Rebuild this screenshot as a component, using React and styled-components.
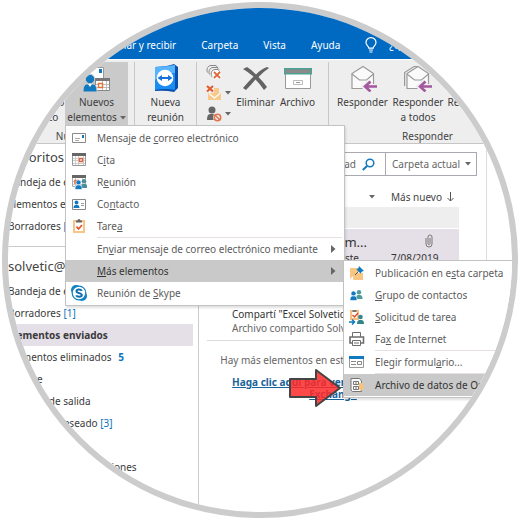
import React, { useState } from 'react';
import styled, { createGlobalStyle } from 'styled-components';

const GlobalStyle = createGlobalStyle`
  * {
    box-sizing: border-box;
  }
  body {
    margin: 2px;
    background: #fff;
    color: #444;
    font: 10px/14px "Noto Sans", "Open Sans", sans-serif;
  }
  button, input, select {
    margin: 0;
    padding: 0;
    border: 0;
    background: none;
    color: inherit;
    font: inherit;
  }
`;

const Lens = styled.div`
  width: 100%;
  aspect-ratio: 1;
  border: 6px solid #ccc;
  border-radius: 50%;
  overflow: hidden;
  display: flex;
  flex-direction: column;
  background: #fff;
`;

/* title bar and tabs */
const Tabs = styled.nav`
  display: flex;
  align-items: flex-end;
  gap: 25px;
  height: 51px;
  padding: 0 0 7px 99px;
  background: #0069c2;
  color: #fff;
  white-space: nowrap;
  flex: none;
`;

const Tab = styled.button`
  display: flex;
  align-items: center;
  gap: 12px;
  height: 14px;
`;

/* ribbon */
const Ribbon = styled.div`
  display: flex;
  height: 84px;
  margin-top: 1px;
  padding-top: 2px;
  background: #eee;
  border-bottom: 1px solid #c6c6c6;
  flex: none;
`;

const Group = styled.section`
  display: flex;
  flex-direction: column;
  flex: none;
  padding: 0 ${({ $pad }) => $pad || 0}px;
  border-right: 1px solid #c8c8c8;
`;

const GroupButtons = styled.div`
  display: flex;
  height: 65px;
`;

const GroupLabel = styled.div`
  height: 16px;
  line-height: 18px;
  text-align: center;
`;

const BigButton = styled.button`
  display: flex;
  flex-direction: column;
  align-items: center;
  justify-content: flex-start;
  width: ${({ $width }) => $width}px;
  height: 65px;
  padding-right: ${({ $shift }) => $shift || 0}px;
  line-height: 15px;
  white-space: nowrap;
  color: #3c3c3c;
  background: ${({ $active }) => ($active ? '#cacaca' : 'none')};

  > svg {
    flex: none;
    margin: 2px 0 3px;
  }
`;

const CaretLine = styled.span`
  display: flex;
  align-items: center;
  gap: 3px;
`;

const SmallButtons = styled.div`
  display: flex;
  flex-direction: column;
  gap: 5px;
  width: 29px;
  padding-top: 2px;
`;

const SmallButton = styled.button`
  display: flex;
  align-items: center;
  gap: 3px;
  height: 16px;
`;

/* menus */
const Anchor = styled.div`
  position: relative;
`;

const MenuBox = styled.div`
  position: absolute;
  z-index: 2;
  left: ${({ $sub }) => ($sub ? 'calc(100% - 1px)' : '0')};
  top: ${({ $sub }) => ($sub ? '0' : 'calc(100% - 2px)')};
  width: ${({ $sub }) => ($sub ? 210 : 280)}px;
  padding: 1px 0;
  background: #fff;
  border: 1px solid #c3c3c3;
  box-shadow: 1px 2px 2px rgba(0, 0, 0, 0.12);
`;

const MenuItem = styled.button`
  display: flex;
  align-items: center;
  gap: 10px;
  width: 100%;
  height: 22px;
  padding: 0 8px 0 5px;
  text-align: left;
  white-space: nowrap;
  color: ${({ $active }) => ($active ? '#333' : '#5c5c5c')};
  background: ${({ $active }) => ($active ? '#c9c9c9' : 'none')};

  > svg {
    flex: none;
  }
`;

const ItemText = styled.span`
  flex: 1;
`;

const IconSlot = styled.span`
  width: 16px;
  height: 16px;
  flex: none;
`;

const MenuLine = styled.hr`
  height: 1px;
  margin: 0 2px 0 31px;
  border: 0;
  background: #e6dfe4;
`;

const Pointer = styled.svg`
  position: absolute;
  right: calc(100% + 2px);
  top: calc(100% - 28px);
  width: 54px;
  height: 40px;
`;

/* panes */
const Panes = styled.div`
  display: grid;
  grid-template-columns: 191px 1fr 25px;
  flex: 1;
  min-height: 0;
`;

const Folders = styled.aside`
  border-right: 1px solid #ccc;
  padding-right: 5px;
  white-space: nowrap;
`;

const FolderTitle = styled.h2`
  margin: 0;
  font-size: 13px;
  font-weight: 400;
  line-height: 27px;
`;

const Folder = styled.a`
  display: block;
  height: 22px;
  line-height: 22px;
  color: #3a3a3a;
  text-decoration: none;
  font-weight: ${({ $active }) => ($active ? 700 : 400)};
  background: ${({ $active }) => ($active ? '#e5dfe7' : 'none')};
`;

const Count = styled.span`
  color: #0b74bd;
  font-weight: ${({ $bold }) => ($bold ? 700 : 400)};
  margin-left: ${({ $bold }) => ($bold ? 4 : 0)}px;
`;

const FolderLine = styled.hr`
  height: 1px;
  margin: 9px 0 6px;
  border: 0;
  background: #ccc;
`;

const List = styled.main`
  min-width: 0;
  padding: 8px 9px 0 8px;
  border-right: 1px solid #dcdcdc;
`;

const SearchBar = styled.div`
  display: flex;
  height: 24px;
  border: 1px solid #aaa8b0;
  color: #666;
`;

const SearchField = styled.label`
  display: flex;
  align-items: center;
  gap: 6px;
  flex: 1;
  padding-right: 10px;

  input {
    flex: 1;
    min-width: 0;
    text-align: right;
  }
`;

const Scope = styled.label`
  display: grid;
  align-items: center;
  width: 95px;
  border-left: 1px solid #aaa8b0;

  select {
    grid-area: 1 / 1;
    appearance: none;
    padding-left: 6px;
  }
  svg {
    grid-area: 1 / 1;
    justify-self: end;
    margin-right: 5px;
    pointer-events: none;
  }
`;

const Rows = styled.div`
  margin-right: 18px;
`;

const SortRow = styled.div`
  display: flex;
  align-items: center;
  height: 31px;
  padding-top: 11px;
`;

const SortBy = styled.button`
  display: flex;
  flex: 1;
  align-items: center;
  justify-content: space-between;
  padding-right: 16px;
`;

const SortOrder = styled.button`
  display: flex;
  align-items: center;
  gap: 5px;
  width: 68px;
`;

const DateGroup = styled.div`
  height: 21px;
  margin-bottom: 1px;
  background: #eee;
`;

const Message = styled.article`
  padding: 4px 0 5px 25px;
  border-bottom: 1px solid #dcdcdc;
  background: ${({ $active }) => ($active ? '#e5dfe7' : 'none')};
`;

const MessageLine = styled.div`
  display: flex;
  height: ${({ $name }) => ($name ? 18 : 14)}px;
  line-height: ${({ $name }) => ($name ? 18 : 14)}px;
  font-size: ${({ $name }) => ($name ? 13 : 10)}px;
  color: ${({ $dark }) => ($dark ? '#333' : '#666')};
  white-space: nowrap;
`;

const Cut = styled.span`
  flex: 1;
  padding-right: 24px;
  text-align: right;
`;

const Side = styled.span`
  width: 68px;

  svg {
    display: block;
    margin: 1px 0 0 34px;
  }
`;

const More = styled.div`
  padding-top: 12px;
  text-align: center;
  color: #666;
`;

const MoreLink = styled.a`
  display: block;
  margin-top: 9px;
  padding: 0 16px;
  line-height: 12px;
  font-weight: 700;
  color: #17649b;
`;

/* icons */
const BLUE = '#1079bf';

const Caret = () => (
  <svg width="6" height="4" viewBox="0 0 6 4">
    <path d="M0 0h6L3 3.5z" fill="#666" />
  </svg>
);

const BulbIcon = () => (
  <svg width="12" height="16" viewBox="0 0 12 16" fill="none" stroke="#fff" strokeWidth="1.2">
    <path d="M3.8 11.2C3.8 9 1 8.4 1 5.4a5 4.8 0 0 1 10 0c0 3-2.8 3.6-2.8 5.8zM4 13h4M4.5 15h3" />
  </svg>
);

const NewItemsIcon = () => (
  <svg width="28" height="28" viewBox="0 0 28 28">
    <path d="M4.5 3.5h16v11h-16z" fill="#fff" stroke="#999" />
    <path d="M16 5h3v4h-3z" fill={BLUE} />
    <path d="M12.5 14.5h14v12h-14z" fill="#fff" stroke="#888" />
    <path d="M12 14h15v3H12z" fill="#777" />
    <path d="M13 20.5h13M13 23.5h13M23.5 17v9M19.5 17v9" stroke="#bbb" />
    <path d="M15.5 19.5h4v4h-4z" fill="#fff" stroke="#e2733b" strokeWidth="1.4" />
    <path d="M0 28c0-5 1.5-8 4-8h6c2.5 0 4 3 4 8z" fill={BLUE} stroke="#cacaca" />
    <path d="M5 20l2 3 2-3z" fill="#fff" />
    <circle cx="7" cy="15" r="4.7" fill={BLUE} stroke="#cacaca" />
  </svg>
);

const TeamIcon = () => (
  <svg width="26" height="28" viewBox="0 0 26 28">
    <path d="M2 3Q13 3 21 0l4 3v21l-4 4Q12 26 2 27z" fill="#0a4fae" />
    <path d="M2 3Q12 3 22 1v25Q12 24 2 26z" fill="#1b8cf0" />
    <path d="M2 3Q12 3 22 1v8Q12 7 2 16z" fill="#55b4fb" />
    <circle cx="12" cy="14" r="8.3" fill="#fff" />
    <path d="M4.5 14L9 11v2h6v-2l4.5 3-4.5 3v-2H9v2z" fill="#1672d8" />
  </svg>
);

const IgnoreIcon = () => (
  <svg width="16" height="16" viewBox="0 0 16 16" fill="none" stroke="#888">
    <path d="M1.5 8.5C0 5 2 1.5 5 1.5h5L12 4" />
    <path d="M3.5 10.5C2 7 4 3.5 7 3.5h4l2 2" />
    <path d="M6 13C4 9 6 5.5 9 5.5h3l2 3" fill="#fafafa" />
    <path d="M8 8l6 6M14 8l-6 6" stroke="#fff" strokeWidth="4" />
    <path d="M8 8l6 6M14 8l-6 6" stroke="#dd6a3a" strokeWidth="1.8" />
  </svg>
);

const CleanIcon = () => (
  <svg width="16" height="16" viewBox="0 0 16 16">
    <path d="M8 3h5v5H8zM2 8h13v7H2z" fill="#f9c98c" />
    <path d="M3 8.5l5.5 4.5L14 8.5" stroke="#fff" fill="none" strokeWidth="1.2" />
    <path d="M1 1l6 5.5M7 1L1 6.5" stroke="#eee" strokeWidth="4" />
    <path d="M1 1l6 5.5M7 1L1 6.5" stroke="#e4592c" strokeWidth="2" />
  </svg>
);

const JunkIcon = () => (
  <svg width="16" height="16" viewBox="0 0 16 16">
    <circle cx="6" cy="4" r="3.5" fill="#666" />
    <path d="M1 14c0-4 1-6 3-6h4c2 0 3 2 3 6z" fill="#666" />
    <circle cx="11.5" cy="11.5" r="4.5" fill="#eee" />
    <circle cx="11.5" cy="11.5" r="3.2" fill="none" stroke="#e0744a" strokeWidth="1.5" />
    <path d="M9 9l5 5" stroke="#e0744a" strokeWidth="1.5" />
  </svg>
);

const DeleteIcon = () => (
  <svg width="28" height="28" viewBox="0 0 28 28">
    <path
      d="M1 5l4-2q5 3 9 7.5Q19 5 25 3l2 1q-6 4-10.5 9 5 5 8.5 10l-3 3q-4-6-8.5-10.500Q9 21 4 26l-3-2q5-6 10.5-11.500Q6 8 1 5z"
      fill="#636363"
    />
  </svg>
);

const ArchiveIcon = () => (
  <svg width="28" height="28" viewBox="0 0 28 28">
    <path d="M1.5 9.5h25v15h-25z" fill="#fff" stroke="#999" />
    <path d="M.7 4.7h26.6v5H.7z" fill="#8a8a8a" stroke="#4aa294" strokeWidth="1.4" />
    <path d="M9.5 16.5h9v4h-9z" fill="#fff" stroke="#bbb" />
    <path d="M12 18.5h4" stroke="#999" />
  </svg>
);

const ReplyIcon = ({ all }) => (
  <svg width="28" height="28" viewBox="0 0 28 28" fill="none" stroke="#9a9a9a" strokeWidth="1.2">
    {all && <path d="M.6 22V8.5L10 2.5h3" />}
    <path d="M3 24.5v-15l11-7 10.5 7v15z" fill="#fafafa" />
    <path d="M3 10l7.5 6h7l7-6" />
    <path d="M28 22.5H17M21 17l-6 5.5 6 5.5" stroke="#eee" strokeWidth="5" />
    <path d="M28 22.5H17M21.5 17.5l-5.5 5 5.5 5" stroke="#a4589f" strokeWidth="2.6" />
  </svg>
);

const MailIcon = () => (
  <svg width="16" height="16" viewBox="0 0 16 16">
    <path d="M1.5 3.5h13v9h-13z" fill="#fff" stroke="#8a8a8a" />
    <path d="M11 5h2v3h-2z" fill={BLUE} />
    <path d="M4 8.5h5M4 10.5h4" stroke="#aaa" />
  </svg>
);

const DateIcon = () => (
  <svg width="16" height="16" viewBox="0 0 16 16">
    <path d="M1.5 2.5h13v11h-13z" fill="#fff" stroke="#999" />
    <path d="M1 1h14v3H1z" fill="#666" />
    <path d="M2 6.5h12M2 8.5h12M2 11.5h12M4.5 4v9M7.5 4v9M12.5 4v9" stroke="#ccc" />
    <path d="M8.5 6.5h3v3h-3z" fill="#fff" stroke="#e2643b" strokeWidth="1.4" />
  </svg>
);

const People = ({ x = 0, y = 0, second = BLUE }) => (
  <g transform={`translate(${x} ${y})`}>
    <circle cx="9" cy="2.2" r="2.2" fill={second} />
    <path d="M6 9c0-3 1-4 2-4h2c1.5 0 2.5 1 2.5 4z" fill={second} />
    <circle cx="3.5" cy="3.5" r="2.5" fill={BLUE} stroke="#fff" strokeWidth=".6" />
    <path d="M0 10.5C0 7.500 1 6 2.500 6h2C6 6 7 7.500 7 10.500z" fill={BLUE} stroke="#fff" strokeWidth=".6" />
  </g>
);

const MeetingIcon = () => (
  <svg width="16" height="16" viewBox="0 0 16 16">
    <path d="M1.5 2.5h13v10h-13z" fill="#fff" stroke="#aaa" />
    <path d="M1 1h14v3H1z" fill="#666" />
    <path d="M2 7.5h12M2 10.5h12M4.5 4v8M11.5 4v8" stroke="#ccc" />
    <path d="M4 10V6.5h4" fill="none" stroke="#e2643b" strokeWidth="1.5" />
    <People x={4} y={5} second="#4c8f9c" />
  </svg>
);

const ContactIcon = () => (
  <svg width="16" height="16" viewBox="0 0 16 16">
    <path d="M1.5 3.5h13v10h-13z" fill="#fff" stroke="#888" />
    <circle cx="5.5" cy="6.5" r="1.9" fill={BLUE} />
    <path d="M2.5 12c0-2 1-3 2-3h2c1 0 2 1 2 3z" fill={BLUE} />
    <path d="M10 7.5h3M10 9.5h3" stroke="#999" />
  </svg>
);

const TaskIcon = () => (
  <svg width="16" height="16" viewBox="0 0 16 16">
    <path d="M3 3h10v11H3z" fill="#fff" stroke="#f7c588" strokeWidth="2" />
    <path d="M5 4.5v-2h1.5a1.5 1.5 0 0 1 3 0H11v2z" fill="#666" />
    <path d="M5.5 8.5l2 2.5L11 7" fill="none" stroke="#e4532c" strokeWidth="1.7" />
  </svg>
);

const SkypeIcon = () => (
  <svg width="16" height="16" viewBox="0 0 16 16">
    <circle cx="5" cy="5" r="5" fill="#0f83c4" />
    <circle cx="11" cy="11" r="5" fill="#0f83c4" />
    <circle cx="8" cy="8" r="6.8" fill="#fff" stroke="#0f83c4" strokeWidth="1.2" />
    <path
      d="M10.8 5.8C10 4 5.5 4 5.5 6.2S10.8 7.8 10.8 10 6 12.2 5.2 10.3"
      fill="none"
      stroke="#0f6fae"
      strokeWidth="2"
    />
  </svg>
);

const PostIcon = () => (
  <svg width="16" height="16" viewBox="0 0 16 16">
    <path d="M1 3h8v5h5v7H6l-5-1z" fill="#f8c583" />
    <path d="M1 14l3-3v4z" fill="#fff" />
    <path d="M10 1l5 5-2 .5-1.5 2-4-4 2-1.5z" fill={BLUE} />
    <path d="M9.5 6.5L6 10" stroke="#555" />
  </svg>
);

const GroupIcon = () => (
  <svg width="16" height="16" viewBox="0 0 16 16">
    <People x={1} y={3} second="#4c9b9a" />
  </svg>
);

const RequestIcon = () => (
  <svg width="16" height="16" viewBox="0 0 16 16">
    <path d="M2 2h7v8H2z" fill="#fff" stroke="#f5c080" strokeWidth="2" />
    <path d="M3.5 3V1h4v2z" fill="#777" />
    <path d="M3.5 6l2 2L9 4" fill="none" stroke="#e4532c" strokeWidth="1.5" />
    <path d="M0 13h5M3 10.5L5.5 13 3 15.5" fill="none" stroke={BLUE} strokeWidth="1.5" />
    <circle cx="11.5" cy="8" r="2.3" fill="#35858c" />
    <path d="M8 15c0-3 1-4 2.5-4h2c1.5 0 2.5 1 2.5 4z" fill="#35858c" />
  </svg>
);

const FaxIcon = () => (
  <svg width="16" height="16" viewBox="0 0 16 16" fill="#fff" stroke="#6d6d6d">
    <path d="M3.5 6V1.5h8V6" />
    <path d="M1 6h13.5v6H1z" strokeWidth="1.6" />
    <path d="M3.5 9.5h8v5h-8zM5 12h5" />
  </svg>
);

const FormIcon = () => (
  <svg width="16" height="16" viewBox="0 0 16 16">
    <path d="M.5 2.5h14v11H.5z" fill="#fff" stroke="#999" />
    <path d="M0 2h15v3H0z" fill={BLUE} />
    <path d="M2 7.5h5M2 10.5h5" stroke="#888" />
    <path d="M8.5 7.5h4v3h-4z" fill="#fff" stroke="#888" />
  </svg>
);

const DataFileIcon = () => (
  <svg width="16" height="16" viewBox="0 0 16 16">
    <path d="M2 1.5h8.5l2 2.5v10.5h-9L2 13z" fill="#fafafa" stroke="#777" />
    <path d="M4.5 4.5h5v3h-5zM4.5 9.5h5v3h-5z" fill="#fff" stroke="#777" />
    <path d="M6 6h2M6 11h2" stroke="#777" />
    <path d="M10 6h4v3h1v2l-3 3-2-2z" fill="#f7c27c" />
  </svg>
);

const PlayIcon = () => (
  <svg width="5" height="8" viewBox="0 0 5 8">
    <path d="M0 0l4.5 4L0 8z" fill="#666" />
  </svg>
);

const SearchIcon = () => (
  <svg width="13" height="13" viewBox="0 0 13 13" fill="none" stroke={BLUE}>
    <circle cx="8" cy="5" r="3.8" strokeWidth="1.5" />
    <path d="M5 8L.8 12" strokeWidth="2" />
  </svg>
);

const DownIcon = () => (
  <svg width="7" height="10" viewBox="0 0 7 10" fill="none" stroke="#555">
    <path d="M3.5 0v9M.5 6l3 3 3-3" />
  </svg>
);

const ClipIcon = () => (
  <svg width="8" height="14" viewBox="0 0 8 14" fill="none" stroke="#777">
    <path d="M1 4v6a3 3 0 0 0 6 0V3a2 2 0 0 0-4 0v6.5a1 1 0 0 0 2 0V4" />
  </svg>
);

const newItems = [
  { icon: MailIcon, text: ['Mensaje de ', 'c', 'orreo electrónico'] },
  { icon: DateIcon, text: ['C', 'i', 'ta'] },
  { icon: MeetingIcon, text: ['R', 'e', 'unión'] },
  { icon: ContactIcon, text: ['Co', 'n', 'tacto'] },
  { icon: TaskIcon, text: ['Tare', 'a', ''], line: true },
  { text: ['En', 'v', 'iar mensaje de correo electrónico mediante'], opens: true },
  { text: ['', 'M', 'ás elementos'], opens: true, sub: true },
  { icon: SkypeIcon, text: ['Reunión de ', 'S', 'kype'] }
];

const moreItems = [
  { icon: PostIcon, text: ['Publicación en e', 's', 'ta carpeta'] },
  { icon: GroupIcon, text: ['', 'G', 'rupo de contactos'] },
  { icon: RequestIcon, text: ['', 'S', 'olicitud de tarea'] },
  { icon: FaxIcon, text: ['Fa', 'x', ' de Internet'], line: true },
  { icon: FormIcon, text: ['Elegir formul', 'a', 'rio...'], line: true },
  { icon: DataFileIcon, text: ['Archivo de datos de Outlook...'], active: true }
];

const favorites = [
  { name: 'Bandeja de entrada' },
  { name: 'Elementos enviados' },
  { name: 'Borradores', count: '[1]' }
];

const folders = [
  { name: 'Bandeja de entrada' },
  { name: 'Borradores', count: '[1]' },
  { name: 'Elementos enviados', active: true },
  { name: 'Elementos eliminados', count: '5', bold: true },
  { name: 'Archive' },
  { name: 'Bandeja de salida' },
  { name: 'Correo no deseado', count: '[3]' },
  { name: 'Fuentes RSS' },
  { name: 'Historial de conversaciones' }
];

const Entry = ({ item, active, onClick }) => {
  const Icon = item.icon;
  const [before, key, after] = item.text;
  return (
    <MenuItem $active={active} onClick={onClick}>
      {Icon ? <Icon /> : <IconSlot />}
      <ItemText>
        {before}
        {key && <u>{key}</u>}
        {after}
      </ItemText>
      {item.opens && <PlayIcon />}
    </MenuItem>
  );
};

const MoreMenu = () => (
  <MenuBox $sub>
    {moreItems.map((item) => (
      <Anchor key={item.text.join('')}>
        <Entry item={item} active={item.active} />
        {item.line && <MenuLine />}
        {item.active && (
          <Pointer viewBox="0 0 54 40">
            <path
              d="M2 11h26V2l24 18-24 18v-9H2z"
              fill="rgba(255, 40, 40, 0.85)"
              stroke="#444"
              strokeWidth="2"
              strokeLinejoin="round"
            />
          </Pointer>
        )}
      </Anchor>
    ))}
  </MenuBox>
);

const FolderList = ({ items }) =>
  items.map(({ name, count, active, bold }) => (
    <Folder key={name} href="#" $active={active}>
      {name} {count && <Count $bold={bold}>{count}</Count>}
    </Folder>
  ));

const App = () => {
  const [moreOpen, setMoreOpen] = useState(true);

  return (
    <>
      <GlobalStyle />
      <Lens>
        <Tabs>
          <Tab>Enviar y recibir</Tab>
          <Tab>Carpeta</Tab>
          <Tab>Vista</Tab>
          <Tab>Ayuda</Tab>
          <Tab>
            <BulbIcon />
            ¿Qué desea hacer?
          </Tab>
        </Tabs>

        <Ribbon>
          <Group>
            <GroupButtons>
              <BigButton $width={57} $shift={8}>
                <NewItemsIcon />
                <span>Nuevo correo</span>
                <span>electrónico</span>
              </BigButton>
              <Anchor>
                <BigButton $width={63} $active>
                  <NewItemsIcon />
                  <span>Nuevos</span>
                  <CaretLine>
                    elementos <Caret />
                  </CaretLine>
                </BigButton>
                <MenuBox>
                  {newItems.map((item) => (
                    <Anchor key={item.text.join('')}>
                      <Entry
                        item={item}
                        active={item.sub && moreOpen}
                        onClick={item.sub ? () => setMoreOpen(!moreOpen) : undefined}
                      />
                      {item.line && <MenuLine />}
                      {item.sub && moreOpen && <MoreMenu />}
                    </Anchor>
                  ))}
                </MenuBox>
              </Anchor>
              <BigButton $width={6} aria-label="Más" />
            </GroupButtons>
            <GroupLabel>Nuevo</GroupLabel>
          </Group>
          <Group>
            <BigButton $width={61}>
              <TeamIcon />
              <span>Nueva</span>
              <span>reunión</span>
            </BigButton>
          </Group>
          <Group $pad={9}>
            <GroupButtons>
              <SmallButtons>
                <SmallButton aria-label="Ignorar">
                  <IgnoreIcon />
                </SmallButton>
                <SmallButton aria-label="Limpiar">
                  <CleanIcon />
                  <Caret />
                </SmallButton>
                <SmallButton aria-label="Correo no deseado">
                  <JunkIcon />
                  <Caret />
                </SmallButton>
              </SmallButtons>
              <BigButton $width={41}>
                <DeleteIcon />
                <span>Eliminar</span>
              </BigButton>
              <BigButton $width={43}>
                <ArchiveIcon />
                <span>Archivo</span>
              </BigButton>
            </GroupButtons>
          </Group>
          <Group $pad={6}>
            <GroupButtons>
              <BigButton $width={55}>
                <ReplyIcon />
                <span>Responder</span>
              </BigButton>
              <BigButton $width={56}>
                <ReplyIcon all />
                <span>Responder</span>
                <span>a todos</span>
              </BigButton>
              <BigButton $width={44}>
                <ReplyIcon />
                <span>Reenviar</span>
              </BigButton>
              <BigButton $width={30} aria-label="Más" />
            </GroupButtons>
            <GroupLabel>Responder</GroupLabel>
          </Group>
        </Ribbon>

        <Panes>
          <Folders>
            <FolderTitle>Favoritos</FolderTitle>
            <FolderList items={favorites} />
            <FolderLine />
            <FolderTitle>solvetic@outlook.com</FolderTitle>
            <FolderList items={folders} />
          </Folders>

          <List>
            <SearchBar>
              <SearchField>
                <input type="text" aria-label="Buscar" defaultValue="Buscar en la unidad" />
                <SearchIcon />
              </SearchField>
              <Scope>
                <select aria-label="Ámbito">
                  <option>Carpeta actual</option>
                </select>
                <Caret />
              </Scope>
            </SearchBar>
            <Rows>
              <SortRow>
                <SortBy>
                  Por Fecha <Caret />
                </SortBy>
                <SortOrder>
                  Más nuevo <DownIcon />
                </SortOrder>
              </SortRow>
              <DateGroup />
              <Message $active>
                <MessageLine $name $dark>
                  <Cut>solvetic@solveticum...</Cut>
                  <Side>
                    <ClipIcon />
                  </Side>
                </MessageLine>
                <MessageLine $dark>
                  <Cut>Archivo adjunto de este...</Cut>
                  <Side>7/08/2019</Side>
                </MessageLine>
                <MessageLine />
              </Message>
              <Message>
                <MessageLine $name />
                <MessageLine $dark>Compartí "Excel Solvetic" contigo</MessageLine>
                <MessageLine>Archivo compartido Solvetic</MessageLine>
              </Message>
              <More>
                Hay más elementos en esta carpeta del servidor
                <MoreLink href="#">Haga clic aquí para ver más en Microsoft Exchange</MoreLink>
              </More>
            </Rows>
          </List>
        </Panes>
      </Lens>
    </>
  );
};

export default App;
